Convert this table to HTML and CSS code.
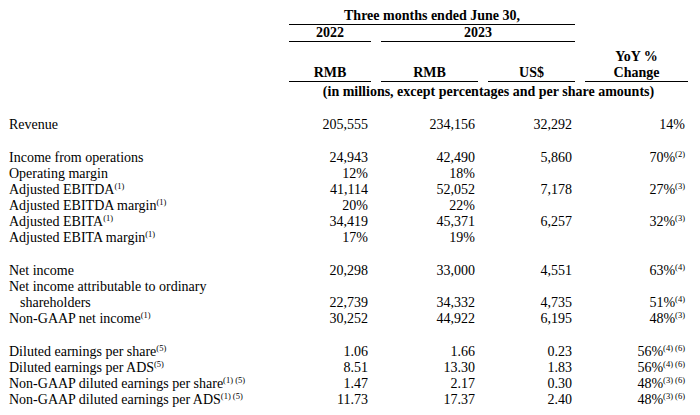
FILE: index.html
```html
<!DOCTYPE html>
<html lang="en">
<head>
<meta charset="utf-8">
<title>Financial summary</title>
<link rel="stylesheet" href="styles.css">
</head>
<body>
<div class="sheet">
  <div class="row hdr-a">
    <div></div>
    <div class="span-3 rule">Three months ended June 30,</div>
    <div></div>
  </div>
  <div class="row hdr-b">
    <div></div>
    <div class="rule">2022</div>
    <div class="span-2 rule">2023</div>
    <div></div>
  </div>
  <div class="row hdr-c">
    <div></div>
    <div class="rule">RMB</div>
    <div class="rule">RMB</div>
    <div class="rule">US$</div>
    <div class="rule">YoY %<br>Change</div>
  </div>
  <div class="row hdr-d">
    <div></div>
    <div class="span-4">(in millions, except percentages and per share amounts)</div>
  </div>
  <div class="spacer"></div>

  <div class="row"><div class="lbl">Revenue</div><div class="num">205,555</div><div class="num">234,156</div><div class="num">32,292</div><div class="num">14%</div></div>
  <div class="spacer"></div>

  <div class="row"><div class="lbl">Income from operations</div><div class="num">24,943</div><div class="num">42,490</div><div class="num">5,860</div><div class="num">70%<sup>(2)</sup></div></div>
  <div class="row"><div class="lbl">Operating margin</div><div class="num">12%</div><div class="num">18%</div><div class="num"></div><div class="num"></div></div>
  <div class="row"><div class="lbl">Adjusted EBITDA<sup>(1)</sup></div><div class="num">41,114</div><div class="num">52,052</div><div class="num">7,178</div><div class="num">27%<sup>(3)</sup></div></div>
  <div class="row"><div class="lbl">Adjusted EBITDA margin<sup>(1)</sup></div><div class="num">20%</div><div class="num">22%</div><div class="num"></div><div class="num"></div></div>
  <div class="row"><div class="lbl">Adjusted EBITA<sup>(1)</sup></div><div class="num">34,419</div><div class="num">45,371</div><div class="num">6,257</div><div class="num">32%<sup>(3)</sup></div></div>
  <div class="row"><div class="lbl">Adjusted EBITA margin<sup>(1)</sup></div><div class="num">17%</div><div class="num">19%</div><div class="num"></div><div class="num"></div></div>
  <div class="spacer"></div>

  <div class="row"><div class="lbl">Net income</div><div class="num">20,298</div><div class="num">33,000</div><div class="num">4,551</div><div class="num">63%<sup>(4)</sup></div></div>
  <div class="row"><div class="lbl">Net income attributable to ordinary</div><div></div><div></div><div></div><div></div></div>
  <div class="row"><div class="lbl indent">shareholders</div><div class="num">22,739</div><div class="num">34,332</div><div class="num">4,735</div><div class="num">51%<sup>(4)</sup></div></div>
  <div class="row"><div class="lbl">Non-GAAP net income<sup>(1)</sup></div><div class="num">30,252</div><div class="num">44,922</div><div class="num">6,195</div><div class="num">48%<sup>(3)</sup></div></div>
  <div class="spacer"></div>

  <div class="row"><div class="lbl">Diluted earnings per share<sup>(5)</sup></div><div class="num">1.06</div><div class="num">1.66</div><div class="num">0.23</div><div class="num">56%<sup>(4) (6)</sup></div></div>
  <div class="row"><div class="lbl">Diluted earnings per ADS<sup>(5)</sup></div><div class="num">8.51</div><div class="num">13.30</div><div class="num">1.83</div><div class="num">56%<sup>(4) (6)</sup></div></div>
  <div class="row"><div class="lbl">Non-GAAP diluted earnings per share<sup>(1) (5)</sup></div><div class="num">1.47</div><div class="num">2.17</div><div class="num">0.30</div><div class="num">48%<sup>(3) (6)</sup></div></div>
  <div class="row"><div class="lbl">Non-GAAP diluted earnings per ADS<sup>(1) (5)</sup></div><div class="num">11.73</div><div class="num">17.37</div><div class="num">2.40</div><div class="num">48%<sup>(3) (6)</sup></div></div>
</div>
</body>
</html>
```
FILE: styles.css
```css
html, body {
  margin: 0;
  padding: 0;
  background: #fff;
}

body {
  font-family: "Liberation Serif", "Times New Roman", serif;
  font-size: 14px;
  line-height: 16px;
  color: #000;
}

.sheet {
  padding: 7.5px 0 0 9px;
  width: 680px;
}

.row {
  display: grid;
  grid-template-columns: 270px 82px 97px 87px 103px;
  column-gap: 10px;
}

.hdr-a, .hdr-b, .hdr-c, .hdr-d {
  font-weight: bold;
  text-align: center;
}

.hdr-c {
  margin-top: 7px;
  align-items: end;
}

.hdr-d {
  margin-top: 2px;
}

.span-2 { grid-column: span 2; }
.span-3 { grid-column: span 3; }
.span-4 { grid-column: span 4; }

.rule {
  border-bottom: 1px solid #000;
}

.spacer {
  height: 17px;
}

.lbl {
  white-space: nowrap;
}

.indent {
  padding-left: 11px;
}

.num {
  text-align: right;
  padding-right: 3px;
  white-space: nowrap;
}

sup {
  font-size: 8.5px;
  line-height: 0;
  vertical-align: 5px;
}
```
